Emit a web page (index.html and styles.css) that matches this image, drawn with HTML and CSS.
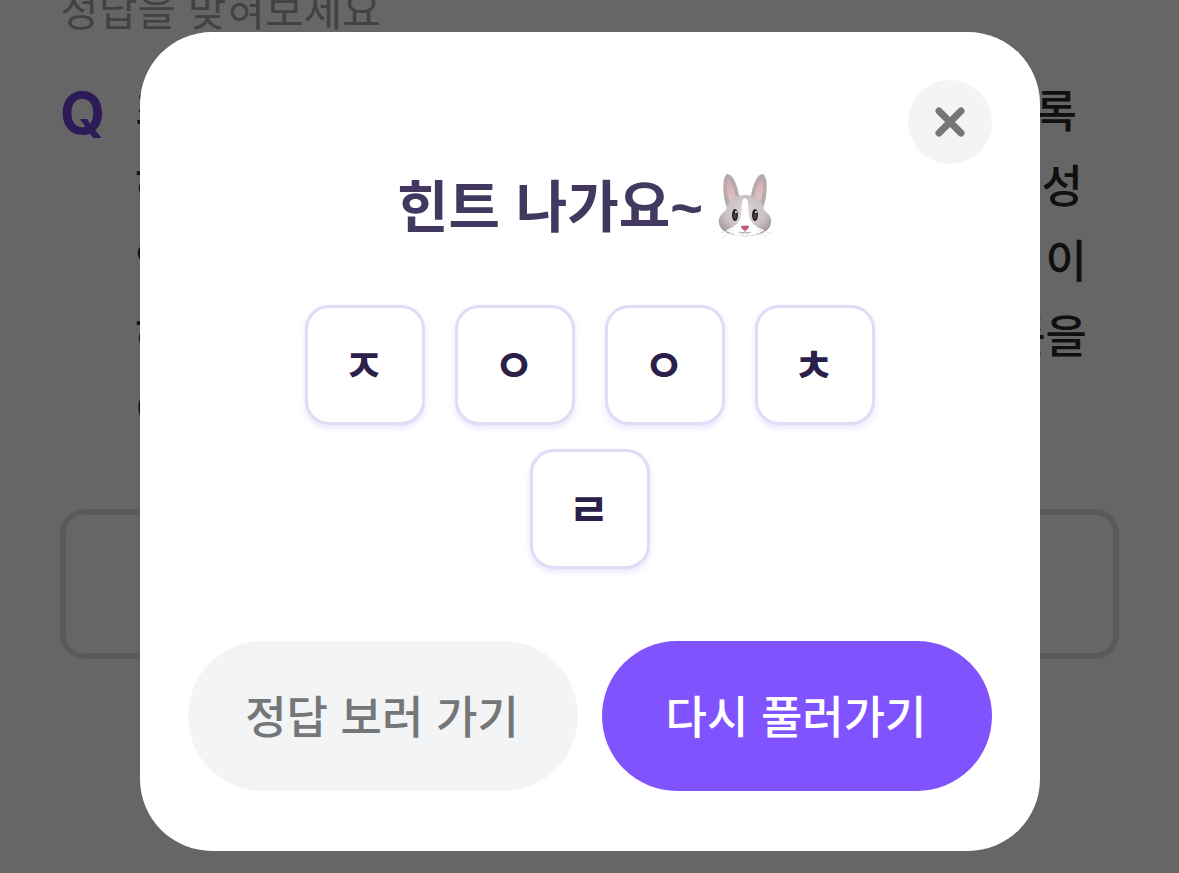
FILE: index.html
```html
<!DOCTYPE html>
<html lang="ko">
<head>
  <meta charset="utf-8">
  <meta name="viewport" content="width=device-width, initial-scale=1">
  <title>힌트</title>
  <link rel="stylesheet" href="styles.css">
</head>
<body>
  <main class="quiz">
    <p class="quiz-guide">정답을 맞혀보세요</p>
    <section class="question">
      <span class="question-mark">Q</span>
      <div class="question-text">
        <p class="line line-short"><span>최</span><span>록</span></p>
        <p class="line line-mid"><span>하</span><span>성</span></p>
        <p class="line"><span>인</span><span>이</span></p>
        <p class="line"><span>하</span><span>뜻을</span></p>
        <p class="line"><span>이</span></p>
      </div>
    </section>
    <input class="answer" type="text" aria-label="정답">
  </main>

  <div class="overlay">
    <div class="modal" role="dialog" aria-modal="true" aria-labelledby="hint-title">
      <div class="modal-top">
        <button class="close" type="button" aria-label="닫기">
          <svg width="30" height="30" viewBox="0 0 30 30" aria-hidden="true">
            <path d="M4 4 26 26M26 4 4 26" fill="none" stroke="#757678" stroke-width="7" stroke-linecap="round"/>
          </svg>
        </button>
      </div>
      <h1 class="title" id="hint-title">
        <span class="title-text">힌트 나가요<span class="tilde">~</span></span>
        <svg class="rabbit" width="60" height="68" viewBox="0 0 60 68" role="img" aria-label="토끼">
          <defs>
            <radialGradient id="fur" cx="50%" cy="42%" r="60%">
              <stop offset="0" stop-color="#ddd5d7"/>
              <stop offset="0.65" stop-color="#cbc1c4"/>
              <stop offset="1" stop-color="#a2979b"/>
            </radialGradient>
            <linearGradient id="ear" x1="0" y1="0" x2="0" y2="1">
              <stop offset="0" stop-color="#cfa9af"/>
              <stop offset="1" stop-color="#e6c6ca"/>
            </linearGradient>
          </defs>
          <path d="M12 36C7 23 7 5 12 2C18 1 24 16 25 31Z" fill="#b5abae"/>
          <path d="M48 36C53 23 53 5 48 2C42 1 36 16 35 31Z" fill="#b5abae"/>
          <path d="M15 31C11 20 11 9 13 7C16 7 20 17 21 29Z" fill="url(#ear)"/>
          <path d="M45 31C49 20 49 9 47 7C44 7 40 17 39 29Z" fill="url(#ear)"/>
          <path d="M30 23C41 23 47 28 49 38C54 42 57 46 56 51C55 60 43 64 30 64C17 64 5 60 4 51C3 46 6 42 11 38C13 28 19 23 30 23Z" fill="url(#fur)"/>
          <path d="M30 26C34 27 33 34 34 43C35 50 40 55 49 58C43 63 37 64 30 64C23 64 17 63 11 58C20 55 25 50 26 43C27 34 26 27 30 26Z" fill="#fff"/>
          <ellipse cx="20" cy="43" rx="3" ry="6" fill="#24201f"/>
          <ellipse cx="40" cy="43" rx="3" ry="6" fill="#24201f"/>
          <ellipse cx="20" cy="44" rx="1.500" ry="3" fill="#4a4544"/>
          <ellipse cx="40" cy="44" rx="1.500" ry="3" fill="#4a4544"/>
          <circle cx="21" cy="40" r="1" fill="#fff"/>
          <circle cx="41" cy="40" r="1" fill="#fff"/>
          <path d="M27 61H33V64Q30 66 27 64Z" fill="#f4f2f3" stroke="#cfc8ca" stroke-width="0.500"/>
          <path d="M26 54Q30 53 34 54Q34 57 30 59Q26 57 26 54Z" fill="#bd5f78"/>
          <path d="M30 58V60Q27 62 24 60M30 60Q33 62 36 60" fill="none" stroke="#b3a4a9" stroke-width="1"/>
          <path d="M18 58 4 61M19 60 7 65M42 58 56 61M41 60 53 65" stroke="#e4dfe1" stroke-width="0.700"/>
        </svg>
      </h1>
      <ul class="tiles">
        <li class="tile">ㅈ</li>
        <li class="tile">ㅇ</li>
        <li class="tile">ㅇ</li>
        <li class="tile">ㅊ</li>
        <li class="tile">ㄹ</li>
      </ul>
      <div class="actions">
        <button class="action action-plain" type="button">정답 보러 가기</button>
        <button class="action action-primary" type="button">다시 풀러가기</button>
      </div>
    </div>
  </div>
</body>
</html>
```
FILE: styles.css
```css
* {
  box-sizing: border-box;
  margin: 0;
  padding: 0;
}

body {
  background: #fff;
  font-family: "Noto Sans CJK KR", sans-serif;
  overflow: hidden;
}

button,
input {
  font: inherit;
}

.quiz {
  padding: 0 60px;
}

.quiz-guide {
  margin-top: -22px;
  color: #a4a6aa;
  font-size: 42px;
  line-height: 60px;
}

.question {
  display: flex;
  gap: 30px;
  margin-top: 33px;
}

.question-mark {
  width: 45px;
  color: #7044dd;
  font-family: Inter, sans-serif;
  font-size: 58px;
  font-weight: 700;
  line-height: 84px;
}

.question-text {
  flex: 1;
  padding-right: 32px;
}

.line {
  display: flex;
  justify-content: space-between;
  color: #28282a;
  font-size: 45px;
  font-weight: 500;
  line-height: 75px;
}

.line-short {
  padding-right: 10px;
}

.line-mid {
  padding-right: 4px;
}

.answer {
  display: block;
  width: 100%;
  height: 150px;
  margin-top: 63px;
  padding: 0 36px;
  border: 6px solid #e1e2e6;
  border-radius: 24px;
  background: #fff;
  font-size: 45px;
}

.overlay {
  position: fixed;
  inset: 0;
  padding: 32px 139px 22px 140px;
  background: rgba(0, 0, 0, 0.6);
  overflow: auto;
}

.modal {
  padding: 48px 48px 60px;
  border-radius: 72px;
  background: #fff;
}

.modal-top {
  display: flex;
  justify-content: flex-end;
}

.close {
  display: grid;
  place-items: center;
  width: 84px;
  height: 84px;
  border: 0;
  border-radius: 50%;
  background: #f2f4f6;
}

.title {
  display: flex;
  align-items: center;
  justify-content: center;
  gap: 12px;
  padding-right: 8px;
  color: #43385f;
  font-size: 56px;
  font-weight: 700;
  line-height: 78px;
}

.title-text {
  padding-bottom: 6px;
}

.tilde {
  font-family: "Liberation Sans", sans-serif;
  line-height: 1;
}

.tiles {
  display: flex;
  flex-wrap: wrap;
  justify-content: center;
  gap: 24px 30px;
  max-width: 600px;
  margin: 57px auto 72px;
  list-style: none;
}

.tile {
  display: grid;
  place-items: center;
  width: 120px;
  height: 120px;
  padding: 0 2px 4px 0;
  border: 3px solid #dfdcf6;
  border-radius: 24px;
  background: #fff;
  box-shadow: 0 3px 6px rgba(128, 83, 255, 0.16);
  color: #2b2148;
  font-size: 45px;
  font-weight: 700;
}

.actions {
  display: flex;
  gap: 24px;
}

.action {
  flex: 1;
  height: 150px;
  padding: 0 2px 4px 0;
  border: 0;
  border-radius: 75px;
  font-size: 45px;
  font-weight: 500;
}

.action-plain {
  background: #f2f4f6;
  color: #757678;
}

.action-primary {
  background: #8053ff;
  color: #fff;
}
```
